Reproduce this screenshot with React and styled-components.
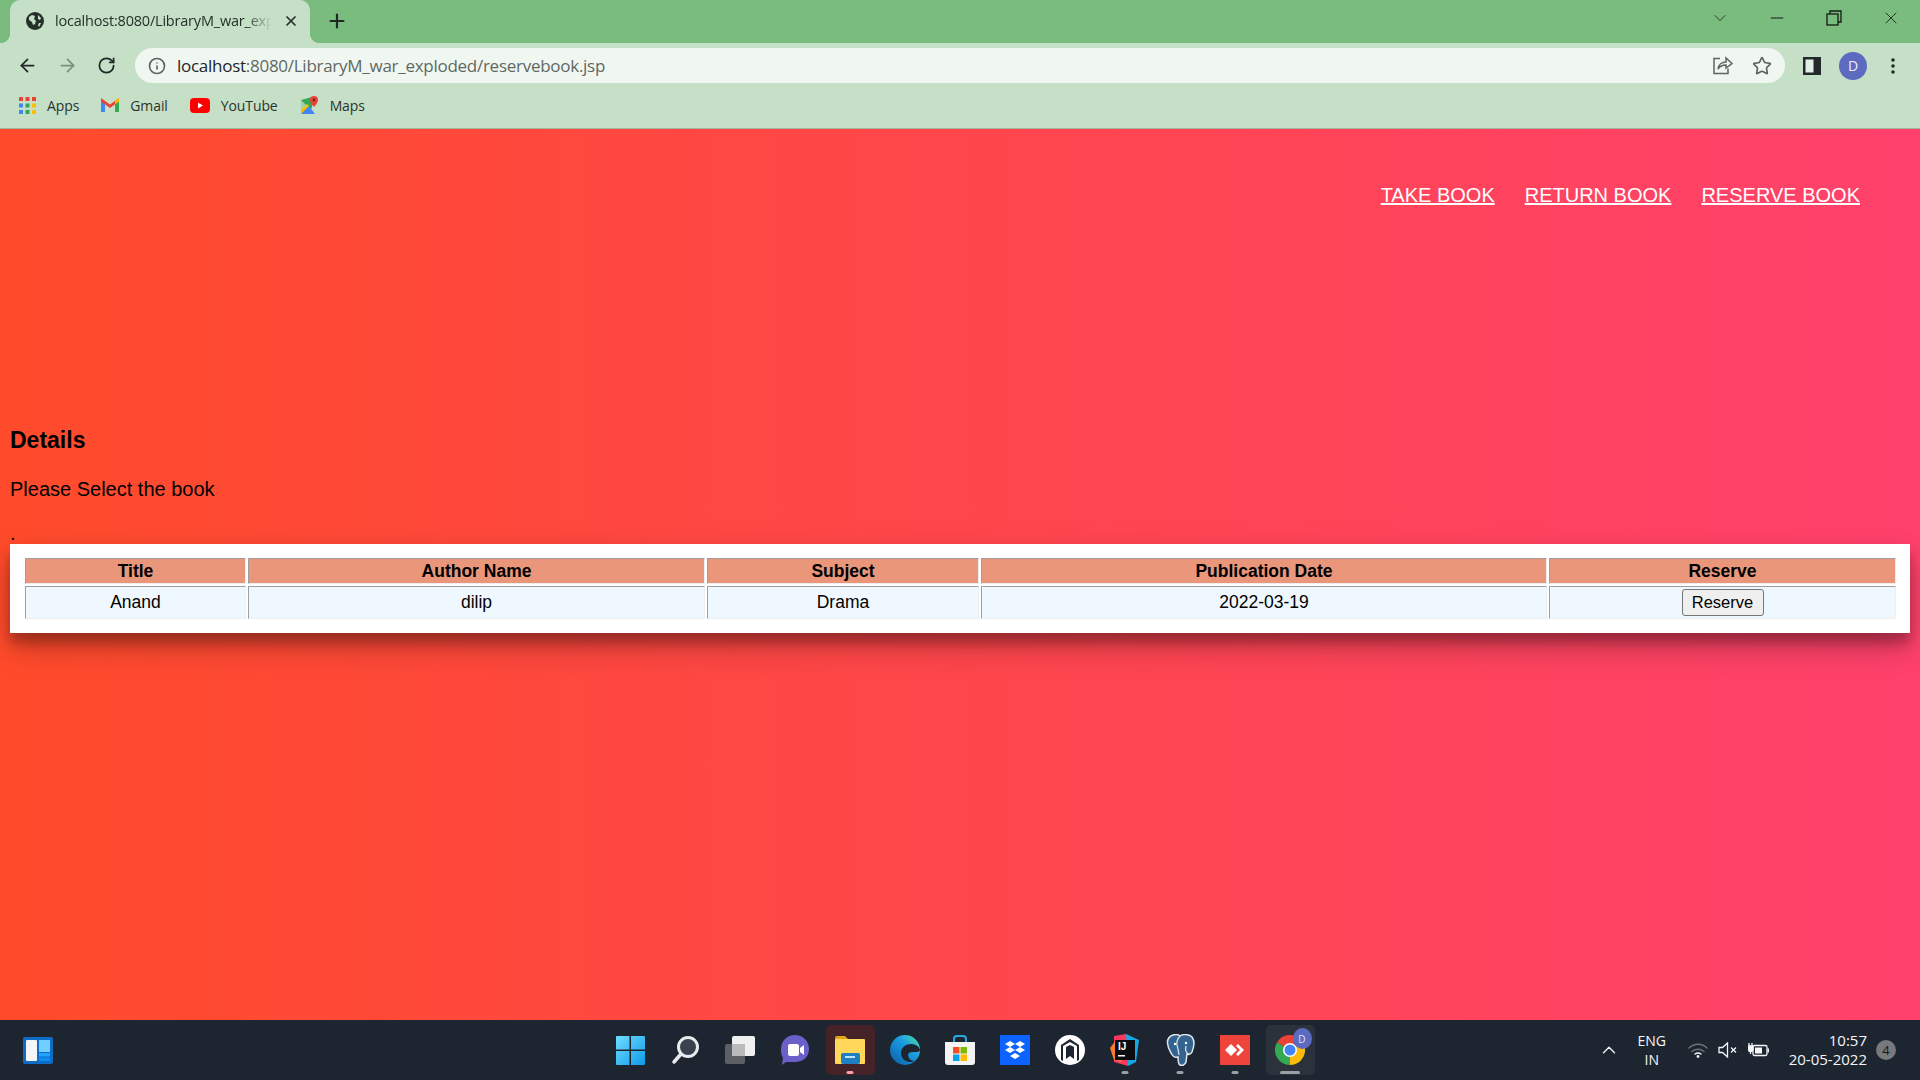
import styled, { createGlobalStyle } from "styled-components";
import { ArrowLeft, ArrowRight, RotateCw, Info, Star, ChevronDown, ChevronUp, Minus, X, Plus } from "lucide-react";

const GlobalStyle = createGlobalStyle`
  * { box-sizing: border-box; }
  html, body { margin: 0; padding: 0; height: 100%; overflow: hidden; }
  body { font-family: "Liberation Sans", Arial, sans-serif; }
`;

const Screen = styled.div`
  width: 1920px;
  height: 1080px;
  display: flex;
  flex-direction: column;
`;

/* browser chrome */
const TabStrip = styled.div`
  height: 43px;
  background: #7abc7e;
  display: flex;
  align-items: flex-end;
  padding-left: 10px;
`;

const Tab = styled.div`
  position: relative;
  width: 300px;
  height: 43px;
  background: #c5e0c6;
  border-radius: 10px 10px 0 0;
  display: flex;
  align-items: center;
  padding: 0 11px 2px 16px;
  gap: 11px;
  color: #26302a;

  &::before, &::after {
    content: "";
    position: absolute;
    bottom: 0;
    width: 10px;
    height: 10px;
  }
  &::before {
    left: -10px;
    background: radial-gradient(circle at 0 0, #7abc7e 10px, #c5e0c6 10.5px);
  }
  &::after {
    right: -10px;
    background: radial-gradient(circle at 100% 0, #7abc7e 10px, #c5e0c6 10.5px);
  }
`;

const TabTitle = styled.span`
  flex: 1;
  overflow: hidden;
  white-space: nowrap;
  font: 14.5px "Open Sans", sans-serif;
  letter-spacing: -0.2px;
  -webkit-mask-image: linear-gradient(to right, #000 88%, transparent 100%);
  mask-image: linear-gradient(to right, #000 88%, transparent 100%);
`;

const NewTab = styled.div`
  display: flex;
  margin: 0 0 11px 16px;
  color: #1f2a22;
  align-self: flex-end;
`;

const WindowControls = styled.div`
  margin-left: auto;
  height: 36px;
  align-self: flex-start;
  display: flex;
  align-items: center;
  gap: 37px;
  padding-right: 19px;
  color: #141a16;
`;

const Toolbar = styled.div`
  height: 43px;
  background: #c5e0c6;
  display: flex;
  align-items: center;
  padding: 2px 0 0 17px;
`;

const NavButtons = styled.div`
  display: flex;
  align-items: center;
  gap: 19px;
  width: 118px;
`;

const Omnibox = styled.div`
  width: 1650px;
  height: 35px;
  border-radius: 18px;
  background: #f0f7f1;
  display: flex;
  align-items: center;
  padding: 0 13px 0 13px;
  gap: 11px;
  color: #5c6660;
`;

const UrlText = styled.div`
  flex: 1;
  font: 17px "Open Sans", sans-serif;
  letter-spacing: -0.27px;
  color: #5f6863;

  b {
    font-weight: 400;
    color: #20262a;
  }
`;

const OmniIcons = styled.div`
  display: flex;
  align-items: center;
  gap: 19px;
`;

const ToolIcons = styled.div`
  display: flex;
  align-items: center;
  margin-left: 18px;
  gap: 18px;
`;

const MenuDots = styled.div`
  display: flex;
  margin-left: 6px;
`;

const Avatar = styled.div`
  width: 28px;
  height: 28px;
  border-radius: 50%;
  background: #5c6bc0;
  color: #eef;
  display: flex;
  align-items: center;
  justify-content: center;
  font: 14px "Open Sans", sans-serif;
`;

const Bookmarks = styled.div`
  height: 43px;
  background: #c5e0c6;
  border-bottom: 1px solid #9db89f;
  display: flex;
  align-items: center;
  padding: 0 0 4px 19px;
  gap: 22px;
`;

const Bookmark = styled.div`
  display: flex;
  align-items: center;
  gap: 11px;
  font: 14px "Open Sans", sans-serif;
  letter-spacing: -0.1px;
  color: #2b332d;
`;

/* page content */
const Main = styled.main`
  flex: 1;
  background: linear-gradient(to right, #ff4b2b, #ff416c);
  padding: 0 10px;
  color: #000;
`;

const TopNav = styled.nav`
  display: flex;
  justify-content: flex-end;
  gap: 30px;
  padding: 55px 50px 0 0;
  height: 298px;
`;

const NavLink = styled.a`
  color: #fff;
  font-size: 20px;
  text-decoration: underline;
  line-height: 23px;
`;

const Heading = styled.h3`
  margin: 0;
  font-size: 23px;
  line-height: 26px;
  font-weight: 700;
`;

const Lead = styled.p`
  margin: 25px 0 0;
  font-size: 20px;
  line-height: 23px;
`;

const Dot = styled.p`
  margin: 21px 0 0;
  font-size: 20px;
  line-height: 23px;
  height: 23px;
`;

const Card = styled.div`
  margin-top: -1px;
  background: #fff;
  padding: 12px 12px 12px 13px;
  box-shadow: 0 14px 28px rgba(0, 0, 0, 0.25), 0 10px 10px rgba(0, 0, 0, 0.22);
`;

const Table = styled.table`
  width: 1875px;
  table-layout: fixed;
  border-collapse: separate;
  border-spacing: 2px;
  font-size: 17.5px;
`;

const HeadCell = styled.th`
  height: 26px;
  padding: 0;
  background: #e9967a;
  border: 1px solid;
  border-color: #9e9e9e #eeeeee #eeeeee #9e9e9e;
  font-weight: 700;
  text-align: center;
`;

const BodyCell = styled.td`
  height: 33px;
  padding: 0;
  background: #f0f8ff;
  border: 1px solid;
  border-color: #9e9e9e #eeeeee #eeeeee #9e9e9e;
  text-align: center;
`;

const ReserveButton = styled.button`
  width: 82px;
  height: 27px;
  padding: 0;
  background: #efefef;
  border: 1px solid #767676;
  border-radius: 3px;
  color: #000;
  font: 16.5px "Liberation Sans", Arial, sans-serif;
  vertical-align: middle;
`;

/* windows taskbar */
const Taskbar = styled.footer`
  height: 60px;
  background: #1d2530;
  display: grid;
  grid-template-columns: 1fr auto 1fr;
  align-items: center;
  color: #f4f6f8;
`;

const TaskLeft = styled.div`
  display: flex;
  padding-left: 23px;
`;

const TaskApps = styled.div`
  display: flex;
  align-items: center;
  gap: 6px;
`;

const TaskApp = styled.div`
  position: relative;
  width: 49px;
  height: 50px;
  border-radius: 5px;
  display: flex;
  align-items: center;
  justify-content: center;
  background: ${(p) => p.$bg || "transparent"};
`;

const RunDot = styled.span`
  position: absolute;
  bottom: 1px;
  left: 50%;
  transform: translateX(-50%);
  width: ${(p) => p.$w || 7}px;
  height: 3px;
  border-radius: 2px;
  background: ${(p) => p.$color || "#9aa0a6"};
`;

const Tray = styled.div`
  display: flex;
  align-items: center;
  justify-content: flex-end;
  padding-right: 24px;
`;

const Lang = styled.div`
  width: 40px;
  margin: 0 16px 0 12px;
  text-align: center;
  font: 14px/19px "Open Sans", sans-serif;
`;

const TrayIcons = styled.div`
  display: flex;
  align-items: center;
  gap: 10px;
  margin-right: 20px;
`;

const Clock = styled.div`
  text-align: right;
  font: 15px/19px "Open Sans", sans-serif;
  margin: -1px 9px 0 0;
`;

const CountBadge = styled.div`
  width: 20px;
  height: 20px;
  border-radius: 50%;
  background: #77797c;
  color: #15191f;
  display: flex;
  align-items: center;
  justify-content: center;
  font: 13px "Open Sans", sans-serif;
`;

const Globe = () => (
  <svg width="18" height="18" viewBox="0 0 18 18">
    <circle cx="9" cy="9" r="9" fill="#26302a" />
    <path d="M3 5l3-2 3 1-1 3 2 2-1 3-2 1-1-3-3-2zM12 3l3 3-1 2-2-1zM13 11l2 0-2 4-1-2z" fill="#c5e0c6" />
  </svg>
);

const RestoreIcon = () => (
  <svg width="20" height="20" viewBox="0 0 20 20" fill="none" stroke="currentColor" strokeWidth="1.300">
    <rect x="3" y="6" width="11" height="11" />
    <path d="M6 6V3h11v11h-3" />
  </svg>
);

const ShareIcon = () => (
  <svg width="21" height="21" viewBox="0 0 21 21" fill="none" stroke="#5c6660" strokeWidth="1.5">
    <path d="M8 3.500H2v15h14v-5" />
    <path d="M6 14c.5-4.500 4-7 8-7V3l6 5.500L14 13V10c-3 0-6 1-8 4z" />
  </svg>
);

const PanelIcon = () => (
  <svg width="18" height="18" viewBox="0 0 18 18">
    <rect width="18" height="18" fill="#22282b" />
    <rect x="2.500" y="2.500" width="8" height="13" fill="#e3eee4" />
  </svg>
);

const DotsIcon = () => (
  <svg width="4" height="16" viewBox="0 0 4 16" fill="#22282b">
    <circle cx="2" cy="2" r="1.800" />
    <circle cx="2" cy="8" r="1.800" />
    <circle cx="2" cy="14" r="1.800" />
  </svg>
);

const AppsIcon = () => {
  const colors = ["#ea4335", "#ea4335", "#ea4335", "#4285f4", "#34a853", "#fbbc05", "#4285f4", "#34a853", "#fbbc05"];
  return (
    <svg width="17" height="17" viewBox="0 0 17 17">
      {colors.map((c, i) => (
        <rect key={i} x={(i % 3) * 6.5} y={Math.floor(i / 3) * 6.5} width="4" height="4" fill={c} />
      ))}
    </svg>
  );
};

const GmailIcon = () => (
  <svg width="18" height="14" viewBox="0 0 18 14">
    <path d="M0 2v12h4V5.500z" fill="#4285f4" />
    <path d="M18 2v12h-4V5.500z" fill="#34a853" />
    <path d="M0 0v3.500l9 6.500 9-6.500V0l-9 6.500z" fill="#ea4335" />
    <path d="M14 2.900L18 0v3.500l-4 2.900z" fill="#fbbc05" />
  </svg>
);

const YoutubeIcon = () => (
  <svg width="20" height="15" viewBox="0 0 20 15">
    <rect width="20" height="15" rx="4" fill="#f00" />
    <path d="M8 4.500v6l5-3z" fill="#fff" />
  </svg>
);

const MapsIcon = () => (
  <svg width="19" height="19" viewBox="0 0 19 19">
    <path d="M1 4l11-3v11L1 18z" fill="#34a853" />
    <path d="M1 18l8-8 6 8z" fill="#4285f4" />
    <path d="M1 18V12l6-4 2 2z" fill="#fbbc05" />
    <path d="M1 4l6 6-6 3z" fill="#9fd3a0" />
    <path d="M14 0a4 4 0 0 1 4 4c0 3-4 7-4 7s-4-4-4-7a4 4 0 0 1 4-4z" fill="#ea4335" />
    <circle cx="14" cy="4" r="1.400" fill="#8b1d15" />
  </svg>
);

const WidgetsIcon = () => (
  <svg width="30" height="27" viewBox="0 0 30 27">
    <rect width="30" height="27" rx="2" fill="#0f6cc4" />
    <rect x="3" y="3" width="11" height="21" rx="1" fill="#f3f5f7" />
    <rect x="16" y="3" width="11" height="12" fill="#6fd0ff" />
    <rect x="16" y="16" width="11" height="3.500" fill="#22a3ff" />
    <rect x="16" y="20.500" width="11" height="3.500" fill="#0e8bf0" />
  </svg>
);

const WinLogo = () => (
  <svg width="29" height="29" viewBox="0 0 29 29">
    <defs>
      <linearGradient id="win" x1="0" y1="0" x2="1" y2="1">
        <stop offset="0" stopColor="#6fdcff" />
        <stop offset="1" stopColor="#0f9be8" />
      </linearGradient>
    </defs>
    <path d="M1 0h12.500v13.500H0V1a1 1 0 0 1 1-1zM15 0h13a1 1 0 0 1 1 1v12.500H15zM0 15h13.500v14H1a1 1 0 0 1-1-1zM15 15h14v13a1 1 0 0 1-1 1H15z" fill="url(#win)" />
  </svg>
);

const SearchApp = () => (
  <svg width="30" height="30" viewBox="0 0 30 30" fill="none">
    <circle cx="18" cy="12" r="9.500" fill="#3a424e" stroke="#e8eaec" strokeWidth="3" />
    <path d="M11 19l-7 8" stroke="#e8eaec" strokeWidth="3.500" strokeLinecap="round" />
  </svg>
);

const TaskViewIcon = () => (
  <svg width="31" height="28" viewBox="0 0 31 28">
    <rect y="8" width="20" height="20" rx="2" fill="#5c5f63" />
    <rect x="7" width="23" height="20" rx="2" fill="#f0f0f0" />
    <rect x="7" y="8" width="13" height="12" fill="#b8babc" />
  </svg>
);

const ChatIcon = () => (
  <svg width="28" height="30" viewBox="0 0 28 30">
    <path d="M14 0c8 0 14 6 14 14s-6 13-14 13H5l-4 3 1-7C0 20 0 17 0 14 0 6 6 0 14 0z" fill="#6b5fc9" />
    <rect x="7" y="9" width="11" height="12" rx="2" fill="#fff" />
    <path d="M19 13l4-3v10l-4-3z" fill="#fff" />
  </svg>
);

const FolderIcon = () => (
  <svg width="30" height="28" viewBox="0 0 30 28">
    <path d="M0 2a2 2 0 0 1 2-2h8l3 3h-13z" fill="#e0a31a" />
    <rect y="3" width="30" height="25" rx="1" fill="#ffd75a" />
    <rect x="6" y="17" width="19" height="11" rx="2" fill="#1e7fc2" />
    <rect x="10" y="20" width="10" height="2" fill="#bfe3f7" />
  </svg>
);

const EdgeIcon = () => (
  <svg width="30" height="30" viewBox="0 0 30 30">
    <defs>
      <linearGradient id="edge" x1="0" y1="1" x2="1" y2="0">
        <stop offset="0" stopColor="#0c59a4" />
        <stop offset="0.6" stopColor="#1b9de2" />
        <stop offset="1" stopColor="#50e6a0" />
      </linearGradient>
    </defs>
    <circle cx="15" cy="15" r="15" fill="url(#edge)" />
    <path d="M30 16c0-4-4-7-9-7-6 0-10 4-10 9 0 5 4 9 9 9 1 0 3 0 4-1-3 0-6-3-6-6 0-2 2-3 5-3 3 0 5 0 7-1z" fill="#1d2530" />
  </svg>
);

const StoreIcon = () => (
  <svg width="30" height="30" viewBox="0 0 30 30">
    <path d="M9 8V4a3 3 0 0 1 3-3h6a3 3 0 0 1 3 3v4" fill="none" stroke="#29a8e0" strokeWidth="2" />
    <path d="M0 7h30v20a3 3 0 0 1-3 3H3a3 3 0 0 1-3-3z" fill="#f4f4f4" />
    <rect x="8" y="12" width="6.500" height="6.500" fill="#f25022" />
    <rect x="15.500" y="12" width="6.500" height="6.500" fill="#7fba00" />
    <rect x="8" y="19.500" width="6.500" height="6.500" fill="#00a4ef" />
    <rect x="15.500" y="19.500" width="6.500" height="6.500" fill="#ffb900" />
  </svg>
);

const DropboxIcon = () => (
  <svg width="30" height="30" viewBox="0 0 30 30">
    <rect width="30" height="30" fill="#0d63ff" />
    <path d="M10 6l5 3-5 3-5-3zM20 6l5 3-5 3-5-3zM10 12l5 3-5 3-5-3zM20 12l5 3-5 3-5-3zM15 18l5 3-5 3-5-3z" fill="#fff" />
  </svg>
);

const ArchIcon = () => (
  <svg width="30" height="30" viewBox="0 0 30 30">
    <circle cx="15" cy="15" r="15" fill="#fff" />
    <path d="M15 4l9 6v15l-2 1V11l-7-4-7 4v15l-2-1V10z" fill="#1d2530" />
    <path d="M11 12l4-2 4 2v12l-4-3-4 3z" fill="#1d2530" />
  </svg>
);

const IdeaIcon = () => (
  <svg width="30" height="32" viewBox="0 0 30 32">
    <path d="M4 2l12-2 6 4-4 28-14-4z" fill="#f9375f" />
    <path d="M16 0l13 6-3 22-8 4z" fill="#16a7e6" />
    <path d="M0 14l6-8 6 22-8-2z" fill="#fb7a2c" />
    <rect x="5" y="6" width="20" height="20" fill="#0c0c10" />
    <text x="8" y="16" fontSize="10" fontWeight="700" fill="#fff" fontFamily="Liberation Sans">IJ</text>
    <rect x="8" y="21" width="7" height="1.500" fill="#fff" />
  </svg>
);

const PostgresIcon = () => (
  <svg width="30" height="32" viewBox="0 0 30 32">
    <path d="M8 1c4-1 6 0 7 1 3-2 9-2 12 1 3 4 2 10 0 15-1 2-3 3-5 2l-1 8c-1 3-4 4-6 3-2-1-2-4-2-8-3 1-5 0-7-4C3 14-1 4 8 1z" fill="#33648f" stroke="#dfe6ec" strokeWidth="1.500" />
    <path d="M15 2c-3 3-4 8-2 13l1 6M24 20c-3-1-4-4-3-8" fill="none" stroke="#dfe6ec" strokeWidth="1.200" />
    <circle cx="10" cy="10" r="1.200" fill="#fff" />
    <circle cx="21" cy="9" r="1.200" fill="#fff" />
  </svg>
);

const AnydeskIcon = () => (
  <svg width="30" height="30" viewBox="0 0 30 30">
    <rect width="30" height="30" fill="#ef443b" />
    <path d="M11 9l6 6-6 6-6-6z" fill="#fff" />
    <path d="M18 9l6 6-6 6 -2-2 4-4-4-4z" fill="#fff" />
  </svg>
);

const ChromeIcon = () => (
  <svg width="30" height="30" viewBox="0 0 30 30">
    <path d="M15 15L2 7.500A15 15 0 0 1 28 7.500z" fill="#ea4335" />
    <path d="M15 15L28 7.500A15 15 0 0 1 15 30z" fill="#fbbc05" />
    <path d="M15 15V30A15 15 0 0 1 2 7.500z" fill="#34a853" />
    <circle cx="15" cy="15" r="7" fill="#fff" />
    <circle cx="15" cy="15" r="5.500" fill="#4285f4" />
  </svg>
);

const WifiIcon = () => (
  <svg width="20" height="16" viewBox="0 0 20 16" fill="none" strokeLinecap="round">
    <path d="M1 6c5-5 13-5 18 0" stroke="#6d7278" strokeWidth="1.400" />
    <path d="M4 9.500c3.500-3 8.500-3 12 0" stroke="#6d7278" strokeWidth="1.400" />
    <path d="M7 12c1.800-1.300 4.200-1.300 6 0" stroke="#f4f6f8" strokeWidth="1.400" />
    <circle cx="10" cy="14.500" r="1.400" fill="#f4f6f8" />
  </svg>
);

const MutedIcon = () => (
  <svg width="20" height="16" viewBox="0 0 20 16" fill="none" stroke="#f4f6f8" strokeWidth="1.300">
    <path d="M1 5.500h3.500L9.500 1v14l-5-4.500H1z" />
    <path d="M13 5.500l5 5M18 5.500l-5 5" />
  </svg>
);

const BatteryIcon = () => (
  <svg width="21" height="16" viewBox="0 0 21 16" fill="none">
    <path d="M1 1v3M4 1v3M0 4h5v3a2.500 2.500 0 0 1-5 0zM2.500 9v3" stroke="#f4f6f8" strokeWidth="1.300" fill="#f4f6f8" />
    <rect x="5" y="3.500" width="14" height="10" rx="1.500" stroke="#f4f6f8" strokeWidth="1.300" />
    <rect x="7" y="5.500" width="7" height="6" fill="#f4f6f8" />
    <rect x="19.500" y="6.500" width="1.500" height="4" fill="#f4f6f8" />
  </svg>
);

const ChromeBadge = styled.div`
  position: absolute;
  top: 3px;
  right: 3px;
  width: 19px;
  height: 21px;
  border-radius: 50%;
  background: #5c6bc0;
  color: #dfe3ff;
  display: flex;
  align-items: center;
  justify-content: center;
  font: 10px "Open Sans", sans-serif;
`;

const columns = [221, 457, 272, 566, 347];
const headers = ["Title", "Author Name", "Subject", "Publication Date", "Reserve"];
const books = [{ title: "Anand", author: "dilip", subject: "Drama", date: "2022-03-19" }];

const marks = [
  { label: "Apps", icon: <AppsIcon /> },
  { label: "Gmail", icon: <GmailIcon /> },
  { label: "YouTube", icon: <YoutubeIcon /> },
  { label: "Maps", icon: <MapsIcon /> },
];

function App() {
  return (
    <Screen>
      <GlobalStyle />
      <TabStrip>
        <Tab>
          <Globe />
          <TabTitle>localhost:8080/LibraryM_war_exploded/reservebook.jsp</TabTitle>
          <X size={16} strokeWidth={2.6} />
        </Tab>
        <NewTab>
          <Plus size={22} strokeWidth={2.4} />
        </NewTab>
        <WindowControls>
          <ChevronDown size={20} strokeWidth={1} />
          <Minus size={20} strokeWidth={1.2} />
          <RestoreIcon />
          <X size={20} strokeWidth={1} />
        </WindowControls>
      </TabStrip>
      <Toolbar>
        <NavButtons>
          <ArrowLeft size={21} color="#22282b" strokeWidth={2} />
          <ArrowRight size={21} color="#7c8c7f" strokeWidth={2} />
          <RotateCw size={19} color="#22282b" strokeWidth={2.2} />
        </NavButtons>
        <Omnibox>
          <Info size={18} strokeWidth={2.2} />
          <UrlText>
            <b>localhost</b>:8080/LibraryM_war_exploded/reservebook.jsp
          </UrlText>
          <OmniIcons>
            <ShareIcon />
            <Star size={20} strokeWidth={2} />
          </OmniIcons>
        </Omnibox>
        <ToolIcons>
          <PanelIcon />
          <Avatar>D</Avatar>
          <MenuDots>
            <DotsIcon />
          </MenuDots>
        </ToolIcons>
      </Toolbar>
      <Bookmarks>
        {marks.map((m) => (
          <Bookmark key={m.label}>
            {m.icon}
            {m.label}
          </Bookmark>
        ))}
      </Bookmarks>

      <Main>
        <TopNav>
          <NavLink href="#take">TAKE BOOK</NavLink>
          <NavLink href="#return">RETURN BOOK</NavLink>
          <NavLink href="#reserve">RESERVE BOOK</NavLink>
        </TopNav>
        <Heading>Details</Heading>
        <Lead>Please Select the book</Lead>
        <Dot>.</Dot>
        <Card>
          <Table>
            <colgroup>
              {columns.map((w, i) => (
                <col key={i} width={w} />
              ))}
            </colgroup>
            <thead>
              <tr>
                {headers.map((h) => (
                  <HeadCell key={h}>{h}</HeadCell>
                ))}
              </tr>
            </thead>
            <tbody>
              {books.map((b) => (
                <tr key={b.title}>
                  <BodyCell>{b.title}</BodyCell>
                  <BodyCell>{b.author}</BodyCell>
                  <BodyCell>{b.subject}</BodyCell>
                  <BodyCell>{b.date}</BodyCell>
                  <BodyCell>
                    <ReserveButton>Reserve</ReserveButton>
                  </BodyCell>
                </tr>
              ))}
            </tbody>
          </Table>
        </Card>
      </Main>

      <Taskbar>
        <TaskLeft>
          <WidgetsIcon />
        </TaskLeft>
        <TaskApps>
          <TaskApp><WinLogo /></TaskApp>
          <TaskApp><SearchApp /></TaskApp>
          <TaskApp><TaskViewIcon /></TaskApp>
          <TaskApp><ChatIcon /></TaskApp>
          <TaskApp $bg="#452227">
            <FolderIcon />
            <RunDot $color="#f7a0a8" />
          </TaskApp>
          <TaskApp><EdgeIcon /></TaskApp>
          <TaskApp><StoreIcon /></TaskApp>
          <TaskApp><DropboxIcon /></TaskApp>
          <TaskApp><ArchIcon /></TaskApp>
          <TaskApp>
            <IdeaIcon />
            <RunDot />
          </TaskApp>
          <TaskApp>
            <PostgresIcon />
            <RunDot />
          </TaskApp>
          <TaskApp>
            <AnydeskIcon />
            <RunDot />
          </TaskApp>
          <TaskApp $bg="#2b323c">
            <ChromeIcon />
            <ChromeBadge>D</ChromeBadge>
            <RunDot $w={20} />
          </TaskApp>
        </TaskApps>
        <Tray>
          <ChevronUp size={22} strokeWidth={1.5} />
          <Lang>
            ENG
            <br />
            IN
          </Lang>
          <TrayIcons>
            <WifiIcon />
            <MutedIcon />
            <BatteryIcon />
          </TrayIcons>
          <Clock>
            10:57
            <br />
            20-05-2022
          </Clock>
          <CountBadge>4</CountBadge>
        </Tray>
      </Taskbar>
    </Screen>
  );
}

export default App;
